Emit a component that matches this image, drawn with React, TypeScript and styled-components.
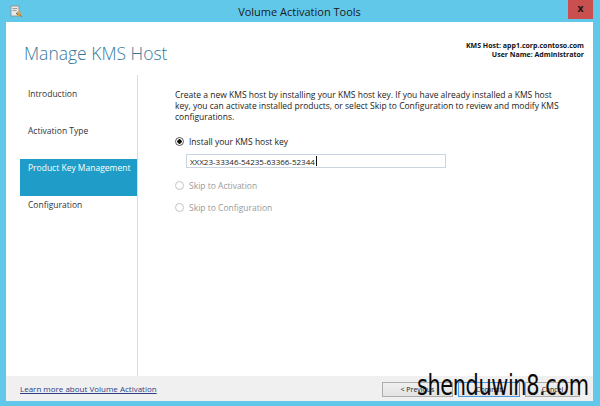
import * as React from 'react';
import styled, { createGlobalStyle } from 'styled-components';

const COLORS = {
  frame: '#62c8ea',
  close: '#c9504e',
  accent: '#1f9dc8',
  heading: '#35799b',
  text: '#1e1e1e',
  muted: '#9a9a9a',
  footer: '#f0f0f0',
  divider: '#dcdcdc',
  link: '#2f3f86',
};

const steps = ['Introduction', 'Activation Type', 'Product Key Management', 'Configuration'];
const activeStep = 2;

const introText = [
  'Create a new KMS host by installing your KMS host key. If you have already installed a KMS host',
  'key, you can activate installed products, or select Skip to Configuration to review and modify KMS',
  'configurations.',
].join('\n');

interface RadioProps {
  label: string;
  checked?: boolean;
  disabled?: boolean;
}

const RadioOption = ({ label, checked, disabled }: RadioProps) => (
  <RadioRow disabled={disabled}>
    <RadioDot checked={checked} disabled={disabled} />
    <span>{label}</span>
  </RadioRow>
);

const AppIcon = () => (
  <svg width="13" height="13" viewBox="0 0 13 13">
    <rect x="1" y="1" width="8" height="10" fill="#e9e9e9" stroke="#8a8a8a" strokeWidth="0.8" />
    <rect x="2.5" y="3" width="5" height="1" fill="#9a9a9a" />
    <rect x="2.5" y="5" width="4" height="1" fill="#9a9a9a" />
    <circle cx="8.5" cy="8.5" r="2.2" fill="#e0a040" />
    <path d="M9.5 9.5 L12 12" stroke="#c47a20" strokeWidth="1.3" />
    <path d="M6 8 L8 10" stroke="#3a78c0" strokeWidth="1" />
  </svg>
);

export default function App() {
  return (
    <>
      <GlobalStyle />
      <Window>
        <TitleBar>
          <TitleIcon>
            <AppIcon />
          </TitleIcon>
          <Title>Volume Activation Tools</Title>
          <CloseButton>x</CloseButton>
        </TitleBar>
        <Client>
          <Header>
            <PageTitle>Manage KMS Host</PageTitle>
            <HostInfo>
              <div>KMS Host: app1.corp.contoso.com</div>
              <div>User Name: Administrator</div>
            </HostInfo>
          </Header>
          <Body>
            <Nav>
              {steps.map((s, i) => (
                <NavItem key={s} active={i === activeStep}>
                  {s}
                </NavItem>
              ))}
            </Nav>
            <Content>
              <Intro>{introText}</Intro>
              <RadioOption label="Install your KMS host key" checked />
              <KeyInput>
                XXX23-33346-54235-63366-52344<Caret />
              </KeyInput>
              <RadioOption label="Skip to Activation" disabled />
              <RadioOption label="Skip to Configuration" disabled />
            </Content>
          </Body>
          <Footer>
            <LearnLink>Learn more about Volume Activation</LearnLink>
            <ButtonRow>
              <Button width={71}>&lt; Previous</Button>
              <Button width={62} primary>
                Commit
              </Button>
              <Button width={55}>Cancel</Button>
            </ButtonRow>
          </Footer>
        </Client>
        <Watermark>shenduwin8.com</Watermark>
      </Window>
    </>
  );
}

const GlobalStyle = createGlobalStyle`
  html, body {
    margin: 0;
    padding: 0;
    width: 600px;
    height: 406px;
    overflow: hidden;
  }
  body {
    font-family: "Open Sans", "Noto Sans", sans-serif;
    color: ${COLORS.text};
  }
`;

const Window = styled.div`
  position: relative;
  width: 600px;
  height: 406px;
  box-sizing: border-box;
  background: ${COLORS.frame};
  padding: 0 7px 5px 6px;
  display: flex;
  flex-direction: column;
  overflow: hidden;
`;

const TitleBar = styled.div`
  height: 22px;
  display: grid;
  grid-template-columns: 1fr auto 1fr;
  align-items: start;
`;

const TitleIcon = styled.div`
  padding: 5px 0 0 4px;
  display: flex;
`;

const Title = styled.div`
  font-size: 11px;
  line-height: 24px;
  color: #1a1a1a;
`;

const CloseButton = styled.div`
  justify-self: end;
  width: 25px;
  height: 19px;
  background: ${COLORS.close};
  color: #1a1a1a;
  font-family: "DejaVu Sans", sans-serif;
  font-weight: 700;
  font-size: 10px;
  line-height: 17px;
  text-align: center;
`;

const Client = styled.div`
  flex: 1;
  background: #fff;
  display: flex;
  flex-direction: column;
`;

const Header = styled.div`
  height: 53px;
  display: flex;
  justify-content: space-between;
  align-items: flex-start;
  padding: 0 9px 0 18px;
`;

const PageTitle = styled.div`
  font-family: "Open Sans", sans-serif;
  font-weight: 300;
  font-size: 17.5px;
  color: ${COLORS.heading};
  margin-top: 19px;
`;

const HostInfo = styled.div`
  margin-top: 19px;
  text-align: right;
  font-size: 7px;
  font-weight: 700;
  line-height: 9px;
  color: #111;
`;

const Body = styled.div`
  flex: 1;
  display: flex;
`;

const Nav = styled.div`
  width: 132px;
  border-right: 1px solid ${COLORS.divider};
  padding: 10px 0 0 14px;
  box-sizing: border-box;
  flex-shrink: 0;
`;

const NavItem = styled.div<{ active?: boolean }>`
  height: 37px;
  padding: 3px 0 0 8px;
  box-sizing: border-box;
  font-size: 8.5px;
  line-height: 11px;
  color: ${p => (p.active ? '#fff' : '#333')};
  background: ${p => (p.active ? COLORS.accent : 'transparent')};
`;

const Content = styled.div`
  flex: 1;
  padding: 14px 10px 0 37px;
  font-size: 8.5px;
`;

const Intro = styled.p`
  margin: 0 0 13px;
  line-height: 11px;
  white-space: pre-line;
  color: #222;
`;

const RadioRow = styled.div<{ disabled?: boolean }>`
  display: flex;
  align-items: center;
  gap: 5px;
  height: 12px;
  margin-bottom: 10px;
  color: ${p => (p.disabled ? COLORS.muted : '#222')};
`;

const RadioDot = styled.span<{ checked?: boolean; disabled?: boolean }>`
  width: 7px;
  height: 7px;
  border-radius: 50%;
  border: 1px solid ${p => (p.disabled ? '#c4c4c4' : '#5a5a5a')};
  background: ${p => (p.checked ? 'radial-gradient(circle, #111 0 2px, #fff 2.4px)' : '#fff')};
  flex-shrink: 0;
`;

const KeyInput = styled.div`
  width: 260px;
  height: 14px;
  box-sizing: border-box;
  border: 1px solid #c9d6e2;
  margin: -3px 0 11px 11px;
  padding-left: 3px;
  display: flex;
  align-items: center;
  font-size: 8px;
  color: #222;
`;

const Caret = styled.span`
  width: 1px;
  height: 10px;
  background: #111;
  margin-left: 1px;
`;

const Footer = styled.div`
  height: 25px;
  background: ${COLORS.footer};
  display: flex;
  align-items: center;
  justify-content: space-between;
  padding: 0 13px 0 14px;
`;

const LearnLink = styled.a`
  font-size: 8px;
  color: ${COLORS.link};
  text-decoration: underline;
`;

const ButtonRow = styled.div`
  display: flex;
  gap: 5px;
  margin-top: 2px;
`;

const Button = styled.div<{ width: number; primary?: boolean }>`
  width: ${p => p.width}px;
  height: 15px;
  box-sizing: border-box;
  border: 1px solid ${p => (p.primary ? '#4a9be0' : '#adadad')};
  background: linear-gradient(#f0f0f0, #e3e3e3);
  font-size: 7px;
  line-height: 13px;
  text-align: center;
  color: #222;
`;

const Watermark = styled.div`
  position: absolute;
  left: 417px;
  top: 367px;
  font-family: "DejaVu Sans Condensed", "DejaVu Sans", sans-serif;
  font-size: 29px;
  letter-spacing: -0.5px;
  line-height: 36px;
  color: #0a0a0a;
  transform: scaleX(0.8);
  transform-origin: left top;
  white-space: nowrap;
`;
